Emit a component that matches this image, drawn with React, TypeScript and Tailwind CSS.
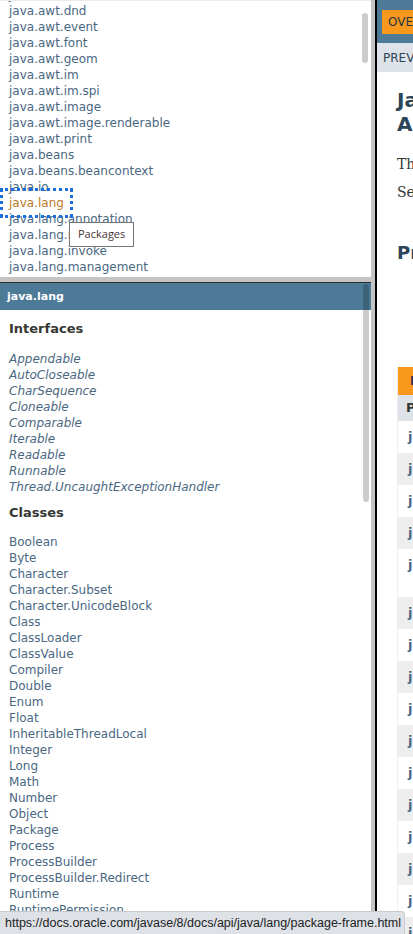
import React from 'react';

// package list in the upper-left frame (scrolled so java.awt.dnd is the first full row)
const topPackages = [
  'java.awt.datatransfer',
  'java.awt.dnd',
  'java.awt.event',
  'java.awt.font',
  'java.awt.geom',
  'java.awt.im',
  'java.awt.im.spi',
  'java.awt.image',
  'java.awt.image.renderable',
  'java.awt.print',
  'java.beans',
  'java.beans.beancontext',
  'java.io',
  'java.lang',
  'java.lang.annotation',
  'java.lang.instrument',
  'java.lang.invoke',
  'java.lang.management',
  'java.lang.ref',
];

const interfaces = [
  'Appendable',
  'AutoCloseable',
  'CharSequence',
  'Cloneable',
  'Comparable',
  'Iterable',
  'Readable',
  'Runnable',
  'Thread.UncaughtExceptionHandler',
];

const classes = [
  'Boolean',
  'Byte',
  'Character',
  'Character.Subset',
  'Character.UnicodeBlock',
  'Class',
  'ClassLoader',
  'ClassValue',
  'Compiler',
  'Double',
  'Enum',
  'Float',
  'InheritableThreadLocal',
  'Integer',
  'Long',
  'Math',
  'Number',
  'Object',
  'Package',
  'Process',
  'ProcessBuilder',
  'ProcessBuilder.Redirect',
  'Runtime',
  'RuntimePermission',
  'SecurityManager',
  'Short',
];

const summaryRows: { name: string; tall?: boolean }[] = [
  { name: 'java.applet' },
  { name: 'java.awt' },
  { name: 'java.awt.color' },
  { name: 'java.awt.datatransfer' },
  { name: 'java.awt.dnd', tall: true },
  { name: 'java.awt.event' },
  { name: 'java.awt.font' },
  { name: 'java.awt.geom' },
  { name: 'java.awt.im' },
  { name: 'java.awt.im.spi' },
  { name: 'java.awt.image' },
  { name: 'java.awt.image.renderable' },
  { name: 'java.awt.print' },
  { name: 'java.beans' },
  { name: 'java.beans.beancontext' },
  { name: 'java.io' },
  { name: 'java.lang' },
];

function PackagesFrame() {
  return (
    <div className="relative h-[277px] overflow-hidden border-t border-[#ececec] bg-white">
      <ul className="-mt-[14px] pl-[9px]">
        {topPackages.map((pkg) => {
          if (pkg === 'java.lang') {
            return (
              <li key={pkg} className="relative h-4 leading-4 text-[#bb7a2a]">
                {pkg}
                <span className="absolute -left-[9px] -top-[7px] h-[30px] w-[73px] border-[3px] border-dotted border-[#1c6fdc]" />
              </li>
            );
          }
          return (
            <li key={pkg} className="h-4 leading-4 text-[#4a6782]">
              {pkg}
            </li>
          );
        })}
      </ul>

      {/* hover tooltip */}
      <div className="absolute left-[69px] top-[221px] flex h-[25px] items-center border border-[#767676] bg-white px-[8px] font-['Open_Sans',sans-serif] text-[11px] text-[#4a3535]">
        Packages
      </div>

      {/* scrollbar thumb */}
      <div className="absolute right-[3px] top-[12px] h-[50px] w-[6px] rounded-full bg-black/20" />
    </div>
  );
}

function ClassesFrame() {
  return (
    <div className="relative flex-1 overflow-hidden bg-white">
      <div className="flex h-[27px] items-center bg-[#4d7a97] pl-[7px] pt-[2px] text-[11px] font-bold text-white">
        java.lang
      </div>
      <div className="pl-[9px]">
        <h2 className="mt-[11px] h-4 text-[13px] font-bold leading-4 text-[#353833]">Interfaces</h2>
        <ul className="mt-[14px]">
          {interfaces.map((name) => (
            <li key={name} className="h-4 leading-4 italic text-[#4a6782]">
              {name}
            </li>
          ))}
        </ul>
        <h2 className="mt-[10px] h-4 text-[13px] font-bold leading-4 text-[#353833]">Classes</h2>
        <ul className="mt-[13px]">
          {classes.map((name) => (
            <li key={name} className="h-4 leading-4 text-[#4a6782]">
              {name}
            </li>
          ))}
        </ul>
      </div>

      {/* scrollbar thumb */}
      <div className="absolute right-[2px] top-[1px] h-[218px] w-[6px] rounded-full bg-black/20" />
    </div>
  );
}

function OverviewFrame() {
  return (
    <div className="h-full flex-1 overflow-hidden bg-white">
      <div className="w-[640px]">
        <div className="h-[43px] bg-[#4d7a97] pl-[5px] pt-[10px]">
          <span className="inline-flex h-[24px] items-center bg-[#f8981d] px-[6px] text-[12px] text-[#253441]">
            OVERVIEW
          </span>
        </div>
        <div className="flex h-[29px] items-center bg-[#dee3e9] pl-[6px] text-[12px] text-[#2c4557]">
          PREV&nbsp;&nbsp;NEXT
        </div>

        <div className="px-[20px]">
          <h1 className="mt-[16px] text-[20px] font-bold leading-[24px] text-[#2c4557]">
            Java™ Platform, Standard Edition 8
            <br />
            API Specification
          </h1>
          <p className="mt-[19px] font-['DejaVu_Serif',Georgia,serif] text-[14px] leading-[18px] text-[#353833]">
            This document is the API specification for the Java™ Platform, Standard Edition.
          </p>
          <p className="mt-[10px] font-['DejaVu_Serif',Georgia,serif] text-[14px] leading-[18px] text-[#353833]">
            See: <span className="text-[#4a6782]">Description</span>
          </p>
          <h2 className="mt-[41px] text-[18px] font-bold leading-[22px] text-[#2c4557]">Profiles</h2>

          <div className="mt-[103px] border-l border-[#eeeeee]">
            <div className="flex h-[28px] w-[100px] items-center bg-[#f8981d] pl-[12px] text-[12px] font-bold text-[#253441]">
              Packages
            </div>
            <div className="flex h-[26px] items-center bg-[#dee3e9] pl-[8px] text-[13px] font-bold text-[#353833]">
              <span className="w-[220px]">Package</span>
              <span>Description</span>
            </div>
            {summaryRows.map((row, i) => (
              <div
                key={row.name}
                className={`flex pl-[10px] pt-[8px] text-[13px] font-bold leading-[16px] text-[#4a6782] ${
                  row.tall ? 'h-[48px]' : 'h-[32px]'
                } ${i % 2 === 0 ? 'bg-white' : 'bg-[#eeeeef]'}`}
              >
                <span className="w-[217px]">{row.name}</span>
              </div>
            ))}
          </div>
        </div>
      </div>
    </div>
  );
}

export default function App() {
  return (
    <div className="relative flex h-[934px] w-[413px] overflow-hidden bg-white font-['DejaVu_Sans',Arial,sans-serif] text-[12px]">
      <div className="flex h-full w-[371px] flex-col">
        <PackagesFrame />
        <div className="h-[5px] bg-[#c4c4c4]" />
        <div className="h-px bg-[#2b2b2b]" />
        <ClassesFrame />
      </div>
      <div className="h-full w-[4px] bg-[#c4c4c4]" />
      <div className="h-full w-[2px] bg-black" />
      <OverviewFrame />

      {/* browser status bubble */}
      <div className="absolute bottom-0 left-0 flex h-[23px] w-[405px] items-center whitespace-nowrap rounded-tr-[4px] border-r border-t border-[#c7c9cc] bg-[#dee1e6] pl-[5px] font-['Liberation_Sans',Arial,sans-serif] text-[12.5px] text-[#202124]">
        https://docs.oracle.com/javase/8/docs/api/java/lang/package-frame.html
      </div>
    </div>
  );
}
